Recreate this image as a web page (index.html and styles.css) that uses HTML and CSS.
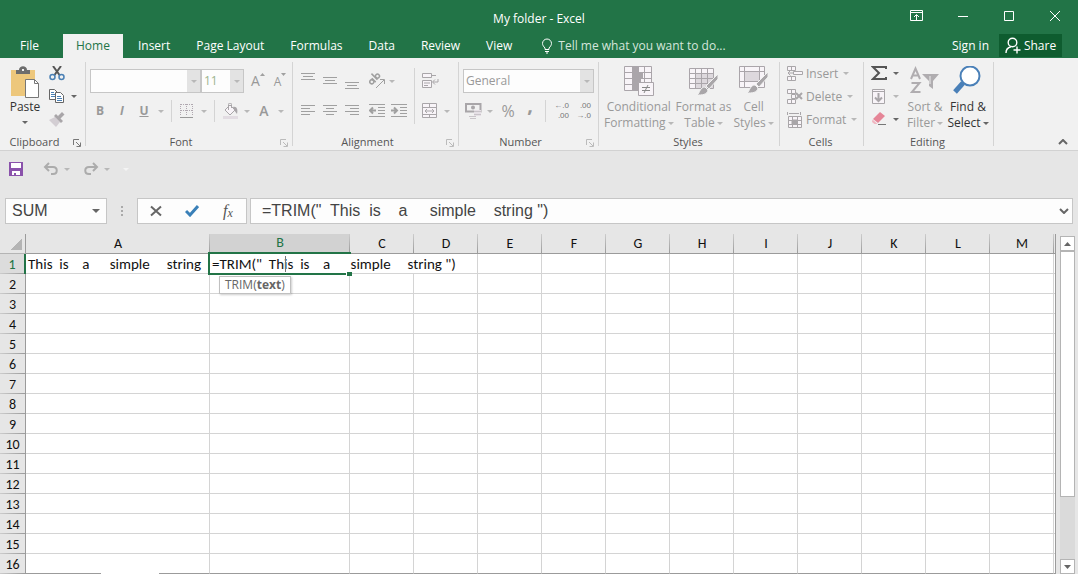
FILE: index.html
```
<!DOCTYPE html>
<html lang="en">

<head>
<meta charset="UTF-8"/>
<meta name="viewport" content="width=device-width, initial-scale=1.0">
<title>My folder - Excel</title>
<link rel="stylesheet" href="styles.css">
</head>

<body>
<header class="titlebar">
    <h1>My folder - Excel</h1>
    <div class="window-buttons">
        <button aria-label="Ribbon display options"><svg width="14" height="12" fill="none" stroke="#fff"><path d="M.5.5h12v10H.5zM0 2.5h13M6.500 10V5M4 7l2.500-2.500L9 7"/></svg></button>
        <button aria-label="Minimize"><svg width="12" height="12" stroke="#fff"><path d="M1 6.500h10"/></svg></button>
        <button aria-label="Maximize"><svg width="12" height="12" fill="none" stroke="#fff"><path d="M1.500 1.500h9v9h-9z"/></svg></button>
        <button aria-label="Close"><svg width="12" height="12" stroke="#fff"><path d="M1 1l10 10M11 1L1 11"/></svg></button>
    </div>
</header>

<nav class="tabs">
    <button class="tab file">File</button>
    <button class="tab active">Home</button>
    <button class="tab">Insert</button>
    <button class="tab">Page Layout</button>
    <button class="tab">Formulas</button>
    <button class="tab">Data</button>
    <button class="tab">Review</button>
    <button class="tab">View</button>
    <button class="tab tell"><svg width="12" height="16" fill="none" stroke="#fff"><path d="M4 11.500V10C2.500 8.500 1.500 7 1.500 5.500a4.500 4.500 0 0 1 9 0C10.500 7 9.500 8.500 8 10v1.500zM4 13.500h4M5 15h2"/></svg>Tell me what you want to do...</button>
    <button class="tab signin">Sign in</button>
    <button class="share"><svg width="16" height="17" fill="none" stroke="#fff" stroke-width="1.400"><circle cx="7.500" cy="5.500" r="4.300"/><path d="M1 16c0-3 2-5.500 5-6.200M12 9.500v7M8.500 13h7"/></svg>Share</button>
</nav>

<main class="ribbon">
    <section class="group clipboard">
        <div class="body">
            <button class="big on">
                <svg width="30" height="32"><path d="M1 4h24v26H1z" fill="#edc77c"/><path d="M6 4h3c0-5 8-5 8 0h3v4H6z" fill="#6d6d6d"/><path d="M12 3h2v2h-2z" fill="#f1f1f1"/><path d="M15.500 13.500h9l4 4v14h-13z" fill="#fff" stroke="#777"/><path d="M24.500 13.500v4h4" fill="none" stroke="#777"/></svg>
                Paste<i class="arr"></i>
            </button>
            <div class="list">
                <div class="row"><button class="ib" aria-label="Cut"><svg width="16" height="16" fill="none" stroke-width="1.500"><path d="M4 0l6.500 9M12 0L5.500 9" stroke="#555" stroke-width="2"/><circle cx="3.500" cy="11" r="2.500" stroke="#4a80b5"/><circle cx="12.500" cy="11" r="2.500" stroke="#4a80b5"/></svg></button></div>
                <div class="row"><button class="ib" aria-label="Copy"><svg width="16" height="16" fill="#fff" stroke="#666"><path d="M.5.5h5l3 3v7h-8z"/><path d="M2 3.500h3M2 5.500h4M2 7.500h4" stroke="#4a80b5"/><path d="M6.500 3.500h5l3 3v7h-8z"/><path d="M8 7.500h4M8 9.500h5M8 11.500h5" stroke="#4a80b5"/></svg></button><button class="dd on" aria-label="Copy options"><i class="arr"></i></button></div>
                <div class="row"><button class="ib" aria-label="Format painter"><svg width="16" height="16"><path d="M0 8l6-3 5 5-4 5z" fill="#d3ced3"/><path d="M5 4l2-2 7 7-2 2zM9 4l4-4 2.500 2.500-4 4z" fill="#a9a6a9"/></svg></button></div>
            </div>
        </div>
        <h2>Clipboard<button class="launch on" aria-label="Clipboard pane"><svg width="8" height="8" fill="none" stroke="currentColor"><path d="M.5 6V.5H6M3 3l4 4M7.500 3.500v4h-4"/></svg></button></h2>
    </section>

    <section class="group font">
        <div class="body two">
            <div class="row">
                <label class="combo fontname"><select aria-label="Font"><option></option></select></label>
                <label class="combo fontsize"><select aria-label="Font size"><option>11</option></select></label>
                <button class="grow ib" aria-label="Increase font size"><span>A</span><svg width="5" height="3" fill="#a0a0a0"><path d="M0 3L2.500 0 5 3z"/></svg></button>
                <button class="shrink ib" aria-label="Decrease font size"><span>A</span><svg width="5" height="3" fill="#a0a0a0"><path d="M0 0L2.500 3 5 0z"/></svg></button>
            </div>
            <div class="row">
                <button class="ib"><b>B</b></button>
                <button class="ib italic"><b>I</b></button>
                <button class="ib under"><b>U</b></button>
                <button class="dd" aria-label="Underline style"><i class="arr"></i></button>
                <span class="sep"></span>
                <button class="ib" aria-label="Borders"><svg width="14" height="14" fill="none" stroke="#b0a8b0"><path d="M1 .5h12M1 6.500h12M.5 0v12M6.500 0v12M12.500 0v12" stroke-dasharray="1 1"/><path d="M0 13.500h13" stroke="#999"/></svg></button>
                <button class="dd" aria-label="Border style"><i class="arr"></i></button>
                <span class="sep"></span>
                <button class="ib" aria-label="Fill colour"><svg width="17" height="16"><path d="M1 13h15v3H1z" fill="#e2dce2"/><path d="M3 7l5-5 5 5-5 5z" fill="#f8f4f8" stroke="#a9a6a9"/><path d="M6.500 7V1.500a1.500 1.500 0 0 1 3 0V5" fill="none" stroke="#a9a6a9"/><path d="M11 4c4-1 5 3 4 7l-3-4z" fill="#a9a6a9"/></svg></button>
                <button class="dd" aria-label="Fill colours"><i class="arr"></i></button>
                <button class="ib" aria-label="Font colour"><b class="large">A</b></button>
                <button class="dd" aria-label="Font colours"><i class="arr"></i></button>
            </div>
        </div>
        <h2>Font<button class="launch" aria-label="Font settings"><svg width="8" height="8" fill="none" stroke="currentColor"><path d="M.5 6V.5H6M3 3l4 4M7.500 3.500v4h-4"/></svg></button></h2>
    </section>

    <section class="group align">
        <div class="body">
            <div class="two">
                <div class="row">
                    <button class="ib" aria-label="Top align"><svg class="lines" width="14" height="16"><path d="M0 .5h14M2 3.500h10M0 6.500h14"/></svg></button>
                    <button class="ib" aria-label="Middle align"><svg class="lines" width="14" height="16"><path d="M0 4.500h14M2 7.500h10M0 10.500h14"/></svg></button>
                    <button class="ib" aria-label="Bottom align"><svg class="lines" width="14" height="16"><path d="M0 9.500h14M2 12.500h10M0 15.500h14"/></svg></button>
                    <button class="ib push" aria-label="Orientation"><svg width="17" height="16" fill="none" stroke="#a0a0a0" stroke-width="1.500"><g transform="rotate(-45 6 7)"><circle cx="2.500" cy="6" r="2"/><path d="M5 3.500V9M8 0v8.500"/><circle cx="10.500" cy="6" r="2"/></g><path d="M7 15l8-8M11 6.500h4.500V11" stroke-width="1"/></svg></button>
                    <button class="dd tight" aria-label="Orientation options"><i class="arr"></i></button>
                </div>
                <div class="row">
                    <button class="ib" aria-label="Align left"><svg class="lines" width="14" height="12"><path d="M0 .5h14M0 3.500h9M0 6.500h14M0 9.500h9"/></svg></button>
                    <button class="ib" aria-label="Centre"><svg class="lines" width="14" height="12"><path d="M0 .5h14M3 3.500h8M0 6.500h14M3 9.500h8"/></svg></button>
                    <button class="ib" aria-label="Align right"><svg class="lines" width="14" height="12"><path d="M0 .5h14M5 3.500h9M0 6.500h14M5 9.500h9"/></svg></button>
                    <button class="ib push" aria-label="Decrease indent"><svg class="lines" width="16" height="14"><path d="M0 .5h16M9 3.500h7M9 6.500h7M9 9.500h7M0 12.500h16"/><path d="M7 6.500H2M4 3.500l-3 3 3 3" stroke-width="2"/></svg></button>
                    <button class="ib" aria-label="Increase indent"><svg class="lines" width="16" height="14"><path d="M0 .5h16M9 3.500h7M9 6.500h7M9 9.500h7M0 12.500h16"/><path d="M0 6.500h5M3 3.500l3 3-3 3" stroke-width="2"/></svg></button>
                </div>
            </div>
            <span class="sep tall"></span>
            <div class="two">
                <div class="row"><button class="ib" aria-label="Wrap text"><svg width="17" height="16" fill="#f8f4f8" stroke="#a9a6a9"><path d="M.5.5h9v4h-9zM.5 7.500h9v7h-9zM2 10h6M2 12.500h4M9.500 2.500H14"/><path d="M16 6v3h-5M13 6.500L10.500 9l2.500 2.500" fill="none"/></svg></button></div>
                <div class="row"><button class="ib" aria-label="Merge and centre"><svg width="16" height="16" fill="#f8f4f8" stroke="#a9a6a9"><path d="M.5.5h14v14H.5zM.5 4.500h14M.5 11.500h14M7.500.5v4M7.500 11.500v3M3 8h9M5 6L3 8l2 2M10 6l2 2-2 2"/></svg></button><button class="dd" aria-label="Merge options"><i class="arr"></i></button></div>
            </div>
        </div>
        <h2>Alignment<button class="launch" aria-label="Alignment settings"><svg width="8" height="8" fill="none" stroke="currentColor"><path d="M.5 6V.5H6M3 3l4 4M7.500 3.500v4h-4"/></svg></button></h2>
    </section>

    <section class="group number">
        <div class="body two">
            <div class="row"><label class="combo format"><select aria-label="Number format"><option>General</option></select></label></div>
            <div class="row">
                <button class="ib" aria-label="Accounting format"><svg width="17" height="16"><path d="M1 1h14.500v7.500H1z" fill="#f1f1f1" stroke="#a9a6a9" stroke-width="2"/><circle cx="8" cy="4.500" r="2" fill="#a9a6a9"/><path d="M9 7h7v6H9z" fill="#e6e0e6"/><path d="M9 8.500h7M9 11.500h7M4 13.500h7M5 15.500h6" stroke="#c9c4c9"/></svg></button>
                <button class="dd" aria-label="Accounting options"><i class="arr"></i></button>
                <button class="ib percent">%</button>
                <button class="ib comma"><b>,</b></button>
                <span class="sep"></span>
                <button class="ib decimal"><span>←.0</span><span>.00</span></button>
                <button class="ib decimal"><span>.00</span><span>→.0</span></button>
            </div>
        </div>
        <h2>Number<button class="launch" aria-label="Number settings"><svg width="8" height="8" fill="none" stroke="currentColor"><path d="M.5 6V.5H6M3 3l4 4M7.500 3.500v4h-4"/></svg></button></h2>
    </section>

    <section class="group styles">
        <div class="body">
            <button class="big">
                <svg width="30" height="32" stroke="#aaa5aa"><path d="M.5.5h27v24H.5z" fill="#f8f4f8"/><path d="M.5 6.500h27M.5 12.500h27M.5 18.500h27M8.500.5v24M20.500.5v24" fill="none"/><path d="M9 1h6v5H9zM9 7h10v5H9zM9 13h8v5H9zM9 19h5v5H9z" fill="#aaa5aa" stroke="none"/><path d="M14.500 16.500h15v13h-15z" fill="#f8f4f8"/><path d="M18 21.500h8M18 24.500h8M24 19l-4 8" fill="none" stroke="#888"/></svg>
                Conditional<span>Formatting<i class="arr"></i></span>
            </button>
            <button class="big">
                <svg width="30" height="32" stroke="#aaa5aa"><path d="M.5 2.500h24v20H.5z" fill="#f8f4f8"/><path d="M7 8h17v14H7z" fill="#ddd8dd" stroke="none"/><path d="M.5 7.500h24M.5 12.500h24M.5 17.500h24M6.500 2.500v20M12.500 2.500v20M18.500 2.500v20" fill="none"/><path d="M29 8v5l-9 10-3-3zM16 21l3 3c-1 5-6 5-11 5 3-2 3-8 8-8z" fill="#a9a6a9" stroke="#f1f1f1"/></svg>
                Format as<span>Table<i class="arr"></i></span>
            </button>
            <button class="big">
                <svg width="30" height="32" stroke="#aaa5aa"><path d="M.5.5h25v21H.5z" fill="#f8f4f8"/><path d="M.5 5.500h25M.5 15.500h25M5.500.5v21M20.500.5v21" fill="none"/><path d="M6 6h14v9H6z" fill="#ddd8dd" stroke="none"/><path d="M29 6v5l-9 10-3-3zM16 19l3 3c-1 5-6 5-11 5 3-2 3-8 8-8z" fill="#a9a6a9" stroke="#f1f1f1"/></svg>
                Cell<span>Styles<i class="arr"></i></span>
            </button>
        </div>
        <h2>Styles</h2>
    </section>

    <section class="group cells">
        <div class="body list">
            <button class="row"><svg width="16" height="16" fill="#f8f4f8" stroke="#a9a6a9"><path d="M.5.5h8v4h-8zM4.500.5v4M.5 10.500h8v4h-8zM4.500 10.500v4M6.500 5.500h9v3h-9zM6 7H1M3.500 4.500L1 7l2.500 2.500"/></svg>Insert<i class="arr"></i></button>
            <button class="row"><svg width="16" height="16" fill="#f8f4f8" stroke="#a9a6a9"><path d="M.5.5h8v4h-8zM4.500.5v4M.5 10.500h8v4h-8zM4.500 10.500v4M4.500 5.500h4v4h-4z"/><path d="M9 4l6 6M15 4l-6 6" stroke-width="2"/></svg>Delete<i class="arr"></i></button>
            <button class="row"><svg width="16" height="16" fill="#f8f4f8" stroke="#a9a6a9"><path d="M1.500 4.500h13v11h-13zM1.500 8.500h13M1.500 12.500h13M5.500 4.500v11M10.500 4.500v11M.5 0v3M13.500 0v3M2 1.500h10"/><path d="M5 8h5v4H5z" fill="#a9a6a9"/></svg>Format<i class="arr"></i></button>
        </div>
        <h2>Cells</h2>
    </section>

    <section class="group editing">
        <div class="body">
            <div class="list">
                <div class="row"><button class="ib" aria-label="AutoSum"><svg width="16" height="16" fill="none" stroke="#555" stroke-width="2"><path d="M15 3V1H2l6 6-6 6h13v-2"/></svg></button><button class="dd on" aria-label="Sum options"><i class="arr"></i></button></div>
                <div class="row"><button class="ib" aria-label="Fill"><svg width="16" height="16" fill="#f8f4f8" stroke="#a9a6a9"><path d="M1.500.5h12v14h-12zM1.500 2.500h12"/><path d="M7.500 4v8M4 8.500l3.500 3.500L11 8.500" fill="none" stroke-width="2"/></svg></button><button class="dd" aria-label="Fill options"><i class="arr"></i></button></div>
                <div class="row"><button class="ib" aria-label="Clear"><svg width="16" height="16"><path d="M9 0l5 4-7 7-5-4z" fill="#e58597"/><path d="M1.500 7.500L6.500 12l-3 0-2.500-2z" fill="#f0b5c0"/><path d="M7 12.500h8" stroke="#777"/></svg></button><button class="dd on" aria-label="Clear options"><i class="arr"></i></button></div>
            </div>
            <button class="big">
                <svg width="30" height="32" fill="none" stroke="#b0adb0" stroke-width="2"><path d="M1 13L5.500 2.500 10 13M2.500 9.500h6M1.500 17h8L2 26h8.500"/><path d="M12 8h17l-6 7v8l-4-3v-5z" fill="#b0adb0" stroke="none"/><path d="M20 10v8" stroke="#eee" stroke-width="1"/></svg>
                Sort &amp;<span>Filter<i class="arr"></i></span>
            </button>
            <button class="big on">
                <svg width="30" height="32"><path d="M10 17L2 26" stroke="#4a80b8" stroke-width="5"/><circle cx="17" cy="10" r="9.500" fill="#fff" stroke="#4a80b8" stroke-width="2"/></svg>
                Find &amp;<span>Select<i class="arr"></i></span>
            </button>
        </div>
        <h2>Editing</h2>
    </section>
    <button class="collapse" aria-label="Collapse the ribbon"><svg width="10" height="6" fill="none" stroke="#666" stroke-width="2"><path d="M1 5l4-4 4 4"/></svg></button>
</main>

<div class="quick">
    <button class="ib" aria-label="Save"><svg width="14" height="14"><path d="M0 0h14v14H0z" fill="#8a52ab"/><path d="M2 1h10v5H2zM3 9h8v4H3z" fill="#fff"/><path d="M5 11h2v2H5z" fill="#8a52ab"/></svg></button>
    <button class="ib undo" aria-label="Undo"><svg width="16" height="14" fill="none" stroke="#acacac" stroke-width="2"><path d="M2 5h8c5 0 5 7 0 7H8M6 1L2 5l4 4"/></svg></button>
    <button class="dd" aria-label="Undo history"><i class="arr"></i></button>
    <button class="ib redo" aria-label="Redo"><svg width="16" height="14" fill="none" stroke="#acacac" stroke-width="2"><path d="M14 5H6c-5 0-5 7 0 7h2M10 1l4 4-4 4"/></svg></button>
    <button class="dd" aria-label="Redo history"><i class="arr"></i></button>
    <button class="dd custom" aria-label="Customise toolbar"><i class="arr"></i></button>
</div>

<div class="formula-bar">
    <div class="namebox"><input aria-label="Name box" value="SUM"><i class="arr"></i></div>
    <span class="dots"></span>
    <div class="entry">
        <button aria-label="Cancel"><svg width="12" height="12" stroke="#666" stroke-width="2"><path d="M1 1.500l10 9M11 1.500l-10 9"/></svg></button>
        <button aria-label="Enter"><svg width="14" height="12" fill="none" stroke="#3a80b8" stroke-width="3"><path d="M1 6l4 4 8-9"/></svg></button>
        <button class="fx" aria-label="Insert function"><i>f</i><small>x</small></button>
    </div>
    <div class="formula"><input aria-label="Formula" value='=TRIM("  This  is    a     simple    string ")'><svg width="10" height="6" fill="none" stroke="#666" stroke-width="2"><path d="M1 1l4 4 4-4"/></svg></div>
</div>

<div class="sheet">
    <table>
        <colgroup><col class="c-head"><col class="c-a"><col class="c-b"><col span="11" class="c-n"><col></colgroup>
        <thead><tr><th class="corner"></th><th>A</th><th class="sel">B</th><th>C</th><th>D</th><th>E</th><th>F</th><th>G</th><th>H</th><th>I</th><th>J</th><th>K</th><th>L</th><th>M</th><th></th></tr></thead>
        <tbody>
        <tr><th class="sel">1</th><td>This  is    a      simple     string</td><td colspan="3" class="edit">=TRIM("  This  is    a      simple     string ")<span class="cursor"></span><span class="tip">TRIM(<b>text</b>)</span></td><td></td><td></td><td></td><td></td><td></td><td></td><td></td><td></td><td></td><td></td></tr>
        <tr><th>2</th><td></td><td></td><td></td><td></td><td></td><td></td><td></td><td></td><td></td><td></td><td></td><td></td><td></td><td></td></tr>
        <tr><th>3</th><td></td><td></td><td></td><td></td><td></td><td></td><td></td><td></td><td></td><td></td><td></td><td></td><td></td><td></td></tr>
        <tr><th>4</th><td></td><td></td><td></td><td></td><td></td><td></td><td></td><td></td><td></td><td></td><td></td><td></td><td></td><td></td></tr>
        <tr><th>5</th><td></td><td></td><td></td><td></td><td></td><td></td><td></td><td></td><td></td><td></td><td></td><td></td><td></td><td></td></tr>
        <tr><th>6</th><td></td><td></td><td></td><td></td><td></td><td></td><td></td><td></td><td></td><td></td><td></td><td></td><td></td><td></td></tr>
        <tr><th>7</th><td></td><td></td><td></td><td></td><td></td><td></td><td></td><td></td><td></td><td></td><td></td><td></td><td></td><td></td></tr>
        <tr><th>8</th><td></td><td></td><td></td><td></td><td></td><td></td><td></td><td></td><td></td><td></td><td></td><td></td><td></td><td></td></tr>
        <tr><th>9</th><td></td><td></td><td></td><td></td><td></td><td></td><td></td><td></td><td></td><td></td><td></td><td></td><td></td><td></td></tr>
        <tr><th>10</th><td></td><td></td><td></td><td></td><td></td><td></td><td></td><td></td><td></td><td></td><td></td><td></td><td></td><td></td></tr>
        <tr><th>11</th><td></td><td></td><td></td><td></td><td></td><td></td><td></td><td></td><td></td><td></td><td></td><td></td><td></td><td></td></tr>
        <tr><th>12</th><td></td><td></td><td></td><td></td><td></td><td></td><td></td><td></td><td></td><td></td><td></td><td></td><td></td><td></td></tr>
        <tr><th>13</th><td></td><td></td><td></td><td></td><td></td><td></td><td></td><td></td><td></td><td></td><td></td><td></td><td></td><td></td></tr>
        <tr><th>14</th><td></td><td></td><td></td><td></td><td></td><td></td><td></td><td></td><td></td><td></td><td></td><td></td><td></td><td></td></tr>
        <tr><th>15</th><td></td><td></td><td></td><td></td><td></td><td></td><td></td><td></td><td></td><td></td><td></td><td></td><td></td><td></td></tr>
        <tr class="last"><th>16</th><td></td><td></td><td></td><td></td><td></td><td></td><td></td><td></td><td></td><td></td><td></td><td></td><td></td><td></td></tr>
        </tbody>
    </table>
    <div class="scroll">
        <button aria-label="Scroll up"><svg width="7" height="4" fill="#666"><path d="M0 4l3.500-4L7 4z"/></svg></button>
        <div class="thumb"></div>
        <div class="track"></div>
        <button aria-label="Scroll down"><svg width="7" height="4" fill="#666"><path d="M0 0l3.500 4L7 0z"/></svg></button>
    </div>
    <span class="sheet-tab"></span>
</div>
</body>

</html>
```
FILE: styles.css
```
:root {
    --green: #227447;
    --panel: #e6e6e6;
    --line: #d4d4d4;
    --edge: #9b9b9b;
    --off: #999;
}
*, *::before, *::after {
    box-sizing: border-box;
}
body {
    margin: 0;
    background: var(--panel);
    font: 12px/16px "Open Sans", "Noto Sans", sans-serif;
    overflow: hidden;
}
button, select, input {
    font: inherit;
    color: inherit;
    background: none;
    border: 0;
    border-radius: 0;
    padding: 0;
    margin: 0;
}
svg {
    display: block;
    flex: none;
}

/* title bar and tabs */
.titlebar {
    display: grid;
    grid-template-columns: 1fr auto 1fr;
    height: 34px;
    background: var(--green);
    color: #fff;
}
.titlebar h1 {
    grid-column: 2;
    margin: 0;
    padding-top: 11px;
    font: inherit;
}
.window-buttons {
    display: flex;
    justify-content: flex-end;
}
.window-buttons button {
    display: flex;
    align-items: center;
    justify-content: center;
    width: 46px;
    height: 32px;
}
.tabs {
    display: flex;
    height: 24px;
    background: var(--green);
    color: #fff;
}
.tab {
    padding: 0 13px;
    white-space: nowrap;
}
.file {
    width: 59px;
    margin-right: 4px;
}
.active {
    margin-right: 2px;
    background: #f1f1f1;
    color: var(--green);
}
.tell {
    display: flex;
    align-items: center;
    gap: 5px;
    padding-left: 16px;
    color: #d5e6dc;
}
.signin {
    margin-left: auto;
    padding: 0 10px;
}
.share {
    display: flex;
    align-items: center;
    justify-content: center;
    gap: 3px;
    width: 63px;
    height: 23px;
    margin-right: 16px;
    background: #0e5c2f;
}

/* ribbon */
.ribbon {
    display: flex;
    height: 93px;
    padding-top: 4px;
    background: #f1f1f1;
    border-bottom: 1px solid #d2d2d2;
    color: var(--off);
}
.group {
    flex: none;
    height: 84px;
    border-right: 1px solid var(--line);
}
.clipboard { width: 86px; }
.font { width: 207px; }
.align { width: 166px; }
.number { width: 140px; }
.styles { width: 181px; }
.cells { width: 84px; }
.editing { width: 130px; }
.body {
    display: flex;
    height: 72px;
    padding: 0 4px;
}
.group h2 {
    position: relative;
    margin: 0;
    padding-right: 16px;
    font-size: 11px;
    line-height: 16px;
    font-weight: normal;
    text-align: center;
    color: #555;
}
.styles h2, .cells h2, .editing h2 {
    padding-right: 2px;
}
.launch {
    position: absolute;
    right: 4px;
    top: 5px;
    color: #bbb;
}
.launch.on {
    color: #777;
}
.two {
    display: flex;
    flex-direction: column;
    gap: 6px;
    padding-top: 7px;
}
.body.two {
    padding-left: 3px;
}
.row {
    display: flex;
    align-items: center;
    height: 24px;
}
.list {
    display: block;
}
.list .row {
    height: 23px;
}
.ib {
    display: flex;
    align-items: center;
    justify-content: center;
    width: 22px;
    height: 22px;
    flex: none;
}
.dd {
    display: flex;
    align-items: center;
    justify-content: center;
    width: 12px;
    height: 22px;
    flex: none;
}
.tight {
    width: 8px;
}
.arr {
    display: inline-block;
    border: 3px solid transparent;
    border-top-color: #b8b8b8;
    border-bottom: 0;
}
.on {
    color: #333;
}
.on .arr, .namebox .arr {
    border-top-color: #666;
}
.sep {
    width: 1px;
    height: 22px;
    margin: 0 4px;
    background: var(--line);
}
.sep.tall {
    height: 56px;
    margin-top: 6px;
}
.big {
    display: flex;
    flex-direction: column;
    align-items: center;
    height: 72px;
    padding-top: 4px;
    line-height: 16px;
    white-space: nowrap;
}
.big svg {
    margin-bottom: 1px;
}
.big .arr {
    margin-left: 2px;
    vertical-align: middle;
}
.clipboard .big {
    width: 42px;
}
.clipboard .big .arr {
    margin: 6px 0 0;
}
.combo {
    position: relative;
    display: flex;
    flex: none;
}
.combo select {
    appearance: none;
    width: 100%;
    height: 24px;
    padding: 0 2px;
    border: 1px solid #c6c6c6;
    background: linear-gradient(#e3e3e3, #e3e3e3) right / 13px 100% no-repeat #fdfdfd;
    opacity: 1;
}
.combo::after {
    content: "";
    position: absolute;
    right: 4px;
    top: 11px;
    border: 3px solid transparent;
    border-top-color: #b8b8b8;
    border-bottom: 0;
}
.fontname { width: 111px; margin-left: 1px; }
.fontsize { width: 43px; color: #9db58f; }
.format { width: 131px; margin-left: 1px; }
.grow {
    align-items: flex-start;
    margin-left: 3px;
    font-size: 14px;
    line-height: 22px;
}
.shrink {
    align-items: flex-start;
    font-size: 12px;
    line-height: 24px;
}
.grow svg, .shrink svg {
    margin-top: 3px;
}
.ib b {
    font-weight: 700;
}
.ib b.large {
    font-size: 14px;
    font-weight: 600;
}
.italic {
    font-style: italic;
}
.under {
    text-decoration: underline;
}
.lines {
    fill: none;
    stroke: #a0a0a0;
}
.push {
    margin-left: 3px;
}
.percent {
    font-size: 16px;
    margin-left: 1px;
}
.comma {
    font-size: 20px;
    line-height: 10px;
    padding-bottom: 12px;
}
.decimal {
    flex-direction: column;
    align-items: flex-end;
    padding-right: 3px;
    font: 8px/10px "Liberation Sans", Arial, sans-serif;
    color: #777;
}
.styles .body {
    gap: 2px;
    padding-left: 5px;
}
.cells .row {
    gap: 3px;
    padding-left: 3px;
}
.cells .arr {
    margin-left: 2px;
}
.editing .body {
    gap: 3px;
}
.editing .big {
    width: 40px;
}
.collapse {
    align-self: flex-end;
    margin: 0 10px 5px auto;
}

/* quick access */
.quick {
    display: flex;
    align-items: center;
    height: 36px;
    margin-bottom: 11px;
    padding-left: 5px;
}
.quick .dd {
    width: 10px;
}
.undo {
    margin-left: 13px;
}
.redo {
    margin-left: 8px;
}
.quick .custom {
    margin-left: 9px;
}
.custom .arr {
    border-top-color: #f4f4f4;
}

/* formula bar */
.formula-bar {
    display: flex;
    align-items: center;
    height: 26px;
    margin: 0 5px 10px;
    font: 16px/24px "Liberation Sans", Arial, sans-serif;
    color: #444;
}
.namebox, .entry, .formula {
    display: flex;
    align-items: center;
    height: 26px;
    border: 1px solid #c6c6c6;
    background: #fdfdfd;
}
.namebox {
    width: 102px;
    padding: 0 6px;
}
.namebox input {
    flex: 1;
    min-width: 0;
}
.namebox .arr {
    border-width: 4px 4px 0;
}
.dots {
    width: 2px;
    height: 10px;
    margin: 0 14px;
    background: repeating-linear-gradient(#aaa 0 2px, transparent 2px 4px);
}
.entry {
    width: 110px;
    margin-right: 3px;
}
.entry button {
    display: flex;
    align-items: center;
    justify-content: center;
    flex: 1;
}
.entry .fx {
    font: 16px/16px "Liberation Serif", serif;
    color: #555;
}
.fx small {
    font-size: 12px;
    font-style: italic;
    padding-top: 3px;
}
.formula {
    flex: 1;
    padding: 0 3px 0 11px;
}
.formula input {
    flex: 1;
    min-width: 0;
    height: 24px;
}

/* grid */
.sheet {
    position: relative;
    display: flex;
    font: 14px/18px Carlito, Lato, sans-serif;
    color: #111;
}
table {
    flex: 1;
    table-layout: fixed;
    width: 0;
    border-spacing: 0;
    border-right: 1px solid var(--edge);
}
.c-head { width: 26px; }
.c-a { width: 184px; }
.c-b { width: 140px; }
.c-n { width: 64px; }
th, td {
    height: 20px;
    padding: 0 0 0 2px;
    white-space: pre;
}
td {
    background: #fff;
    border-right: 1px solid var(--line);
    border-bottom: 1px solid var(--line);
    font-size: 15px;
}
td:last-child {
    border-right: 0;
}
th {
    padding: 2px 0 0;
    font-weight: normal;
}
thead th {
    padding-top: 1px;
    border-bottom: 1px solid var(--edge);
    background: linear-gradient(#ccc, var(--edge)) right / 1px 100% no-repeat var(--panel);
}
thead th:last-child {
    background: var(--panel);
}
thead th.sel {
    padding-top: 0;
    border-bottom: 2px solid var(--green);
    background-color: #d2d2d2;
    color: var(--green);
}
tbody th {
    border-right: 1px solid var(--edge);
    background: linear-gradient(90deg, #ccc, var(--edge)) bottom / 100% 1px no-repeat var(--panel);
}
tbody th.sel {
    border-right: 2px solid var(--green);
    background-color: #dcdcdc;
    color: var(--green);
}
thead th.corner {
    border-bottom-color: #b4b4b4;
    background: linear-gradient(135deg, transparent 50%, #b4b4b4 50%) 10px 4px / 12px 12px no-repeat var(--panel);
    border-right: 1px solid var(--edge);
}
.last td {
    border-bottom-color: var(--edge);
}
.edit {
    position: relative;
}
.edit::before {
    content: "";
    position: absolute;
    left: -2px;
    top: -2px;
    width: 143px;
    height: 23px;
    border: 2px solid var(--green);
    border-right: 0;
}
.edit::after {
    content: "";
    position: absolute;
    left: 136px;
    top: 18px;
    width: 6px;
    height: 4px;
    background: var(--green);
    border-left: 1px solid #fff;
}
.cursor {
    position: absolute;
    left: 75px;
    top: 2px;
    width: 1px;
    height: 16px;
    background: #777;
}
.tip {
    position: absolute;
    left: 9px;
    top: 22px;
    z-index: 1;
    padding: 0 5px;
    border: 1px solid #c0c0c0;
    background: #fff;
    box-shadow: 1px 1px 2px rgba(0, 0, 0, .2);
    font: 12px/16px "Open Sans", sans-serif;
    color: #666;
}
.scroll {
    display: flex;
    flex-direction: column;
    width: 15px;
    margin: 2px 3px 0 4px;
}
.scroll button {
    display: flex;
    align-items: center;
    justify-content: center;
    flex: none;
    height: 15px;
    border: 1px solid #b4b4b4;
    background: #fff;
}
.thumb {
    flex: 246;
    border: 1px solid #b4b4b4;
    background: #fff;
}
.track {
    flex: 62;
    background: #dadada;
}
.sheet-tab {
    position: absolute;
    left: 101px;
    bottom: 0;
    width: 58px;
    height: 1px;
    background: #fff;
}
```
